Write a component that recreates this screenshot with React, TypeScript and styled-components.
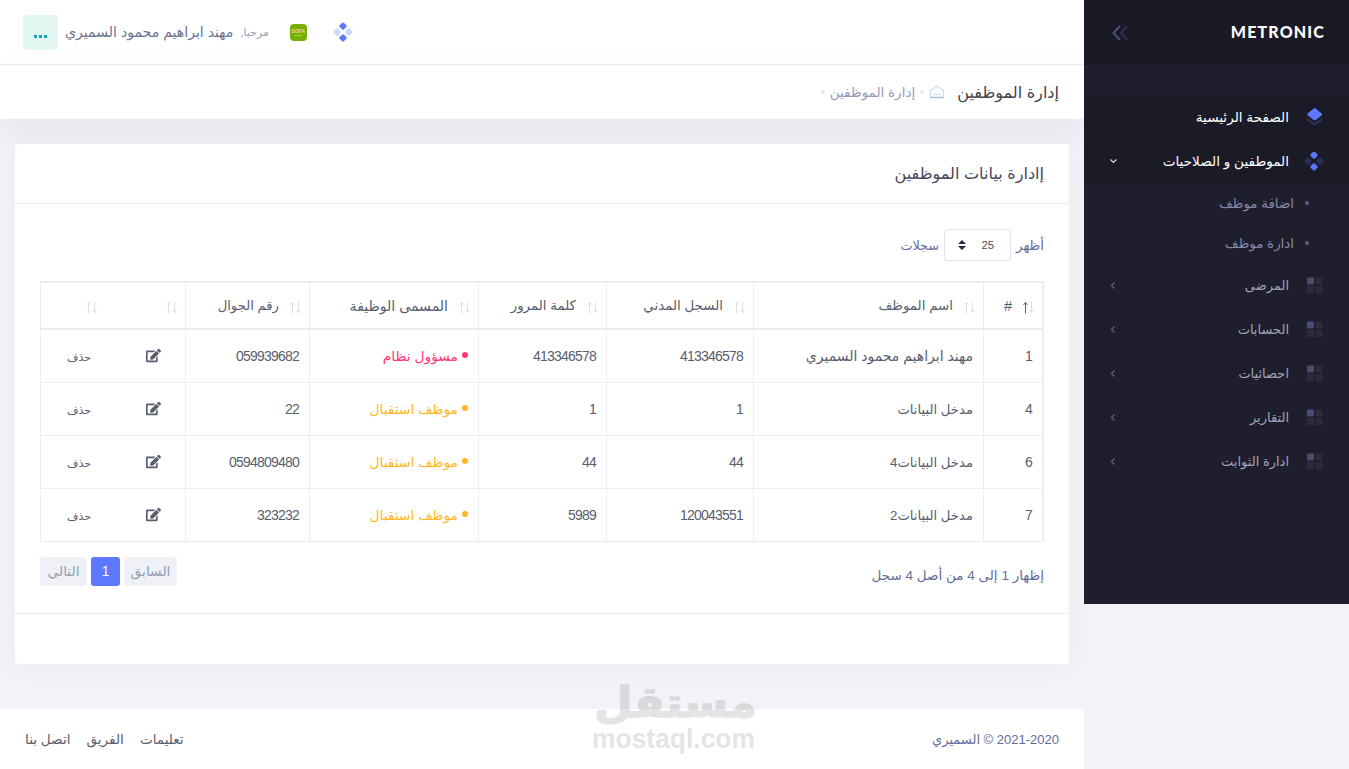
import React, { useState } from 'react';
import styled, { createGlobalStyle } from 'styled-components';
import { FaEdit } from 'react-icons/fa';

const GlobalStyle = createGlobalStyle`
  * {
    box-sizing: border-box;
  }

  body {
    margin: 0;
    background: #f2f3f8;
    color: #646c9a;
    font-family: 'Liberation Sans', 'DejaVu Sans', sans-serif;
    font-size: 13px;
    overflow: hidden;
  }
`;

const Page = styled.div`
  direction: rtl;
  display: flex;
  align-items: flex-start;
  width: 1349px;
  height: 769px;
  position: relative;
  overflow: hidden;
`;

const Text = styled.span<{ $size?: number; $color?: string }>`
  font-size: ${({ $size }) => $size || 13.4}px;
  color: ${({ $color }) => $color || 'inherit'};
  white-space: nowrap;
`;

const Sidebar = styled.aside`
  width: 265px;
  height: 604px;
  flex-shrink: 0;
  background: #1e1e2d;
  position: relative;
  z-index: 1;
`;

const Brand = styled.div`
  height: 65px;
  display: flex;
  align-items: center;
  justify-content: space-between;
  padding: 0 25px 0 27px;
  background: #1a1a27;
`;

const BrandName = styled.div`
  direction: ltr;
  font-family: Lato, sans-serif;
  font-size: 16px;
  font-weight: 900;
  letter-spacing: 1.15px;
  margin: -3px -1px 0 0;
  color: #fff;
`;

const Menu = styled.nav`
  margin-top: 30px;
`;

const MenuItem = styled.div<{ $active?: boolean }>`
  height: 44px;
  display: flex;
  align-items: center;
  padding: 0 25px;
  color: ${({ $active }) => ($active ? '#fff' : '#a2a3b7')};
  background: ${({ $active }) => ($active ? '#1b1b28' : 'transparent')};

  > svg:first-child {
    flex-shrink: 0;
    margin-left: 15px;
  }

  > svg:last-child:not(:first-child) {
    margin-right: auto;
  }
`;

const SubItem = styled.div`
  height: 40px;
  display: flex;
  align-items: center;
  gap: 11px;
  padding-right: 40px;
  color: #868aa8;

  &::before {
    content: '';
    width: 4px;
    height: 4px;
    border-radius: 50%;
    background: #5c5e81;
  }
`;

const Main = styled.div`
  width: 1084px;
  height: 769px;
  display: flex;
  flex-direction: column;
`;

const Topbar = styled.header`
  height: 65px;
  display: flex;
  align-items: center;
  justify-content: flex-end;
  padding-left: 23px;
  background: #fff;
  border-bottom: 1px solid #ebedf2;
`;

const AppLogo = styled.div`
  width: 17px;
  height: 17px;
  margin: 0 26px 0 21px;
  border-radius: 4px;
  background: #76b007;
  color: #f3c9b0;
  font: bold 5px/14px 'Liberation Sans', sans-serif;
  text-align: center;

  &::after {
    content: '';
    display: block;
    width: 7px;
    margin: -3px auto 0;
    border-top: 1px dotted #d5e5a5;
  }
`;

const UserName = styled(Text)`
  margin: 0 7px 0 7px;
`;

const UserBadge = styled.div`
  width: 35px;
  height: 35px;
  display: flex;
  align-items: center;
  justify-content: center;
  gap: 2px;
  padding-top: 8px;
  border-radius: 4px;
  background: #e2f7f2;

  i {
    width: 3px;
    height: 3px;
    background: #1da3b8;
  }
`;

const Subheader = styled.div`
  height: 54px;
  flex-shrink: 0;
  display: flex;
  align-items: center;
  padding: 0 25px;
  background: #fff;
  box-shadow: 0 10px 30px 0 rgba(82, 63, 105, 0.08);
`;

const Crumbs = styled.div`
  display: flex;
  align-items: center;
  gap: 5px;
  margin-right: 12px;
`;

const CrumbDot = styled.i`
  width: 4px;
  height: 4px;
  border-radius: 50%;
  background: #e7e8ef;
`;

const Card = styled.section`
  height: 520px;
  flex-shrink: 0;
  margin: 25px 15px 45px;
  background: #fff;
  border-radius: 4px;
  box-shadow: 0 0 30px 0 rgba(82, 63, 105, 0.05);
`;

const CardHead = styled.div`
  height: 60px;
  display: flex;
  align-items: center;
  padding: 0 25px;
  border-bottom: 1px solid #ebedf2;
`;

const CardBody = styled.div`
  height: 410px;
  padding: 25px 25px 0;
  border-bottom: 1px solid #ebedf2;
`;

const LengthRow = styled.div`
  height: 32px;
  display: flex;
  align-items: center;
  gap: 5px;
  margin-bottom: 20px;
`;

const LengthSelect = styled.button`
  width: 67px;
  height: 32px;
  display: flex;
  align-items: center;
  gap: 15px;
  padding: 0 16px 0 0;
  border: 1px solid #e2e5ec;
  border-radius: 3px;
  background: #fff;
  color: #495057;
  font: 11.4px 'Liberation Sans', sans-serif;
`;

const Table = styled.table`
  width: 1004px;
  table-layout: fixed;
  border-collapse: separate;
  border-spacing: 0;
  border-top: 2px solid #ebedf2;
  border-right: 2px solid #ebedf2;
  color: #595d6e;
`;

const HeadCell = styled.th<{ $plain?: boolean }>`
  height: 47px;
  padding: 0 7px 0 0;
  border-left: ${({ $plain }) => ($plain ? 0 : 1)}px solid #ebedf2;
  border-bottom: 2px solid #ebedf2;
  font-weight: 400;
`;

const HeadContent = styled.div`
  display: flex;
  align-items: center;
  gap: 10px;

  svg {
    margin-top: 4px;
  }
`;

const Cell = styled.td<{ $plain?: boolean; $right?: number }>`
  height: 53px;
  padding: 0 ${({ $right }) => $right ?? 10}px 0 0;
  border-left: ${({ $plain }) => ($plain ? 0 : 1)}px solid #ebedf2;
  border-bottom: 1px solid #ebedf2;
  text-align: right;
  vertical-align: middle;
  white-space: nowrap;

  svg {
    display: block;
    margin-top: -2px;
  }
`;

const Digits = styled.span`
  font-size: 14px;
  letter-spacing: -0.78px;
`;

const Status = styled.div<{ $color: string }>`
  display: flex;
  align-items: center;
  gap: 4px;
  color: ${({ $color }) => $color};

  &::before {
    content: '';
    width: 6px;
    height: 6px;
    margin-top: -2px;
    border-radius: 50%;
    background: ${({ $color }) => $color};
  }
`;

const TableFooter = styled.div`
  display: flex;
  justify-content: space-between;
  align-items: flex-start;
  margin-top: 15px;
`;

const Info = styled.div`
  height: 36px;
  display: flex;
  align-items: center;
`;

const Pager = styled.div`
  display: flex;
  gap: 4px;
`;

const PageButton = styled.button<{ $width: number; $current?: boolean }>`
  width: ${({ $width }) => $width}px;
  height: 29px;
  padding: 0 0 1px;
  border: 0;
  border-radius: 3px;
  background: ${({ $current }) => ($current ? '#5d78ff' : '#f0f0f7')};
  color: ${({ $current }) => ($current ? '#fff' : '#93a2b4')};
  font: 13.8px 'Liberation Sans', 'DejaVu Sans', sans-serif;
`;

const Footer = styled.footer`
  height: 60px;
  flex-shrink: 0;
  display: flex;
  align-items: center;
  justify-content: space-between;
  padding: 0 25px;
  background: #fff;
`;

const FooterLinks = styled.div`
  display: flex;
  gap: 16px;
  color: #595d6e;
`;

const Watermark = styled.div`
  position: absolute;
  left: 589px;
  top: 672px;
  z-index: 2;
  direction: ltr;
  opacity: 0.1;
  pointer-events: none;
`;

const LayersIcon = () => (
  <svg width="20" height="20" viewBox="-1.700 0 20 20">
    <path d="M1.500 11 9 16l7.500-5v2.500L9 18.500 1.500 13.500z" fill="#2e3160" />
    <path d="M8 1.500Q9 .7 10 1.500L16 6.400Q17 7.300 16 8.200L10 13Q9 13.800 8 13L2 8.200Q1 7.300 2 6.400z" fill="#5d78ff" />
  </svg>
);

const DiamondsIcon = ({ side }: { side: string }) => (
  <svg width="20" height="20" viewBox="0 0 20 20">
    <g fill="#5d78ff">
      <rect x="7" y="1.100" width="6" height="6" rx="1.500" transform="rotate(45 10 4.100)" />
      <rect x="7" y="12.900" width="6" height="6" rx="1.500" transform="rotate(45 10 15.900)" />
    </g>
    <g fill={side}>
      <rect x="1.100" y="7" width="6" height="6" rx="1.500" transform="rotate(45 4.100 10)" />
      <rect x="12.900" y="7" width="6" height="6" rx="1.500" transform="rotate(45 15.900 10)" />
    </g>
  </svg>
);

const GridIcon = () => (
  <svg width="20" height="18" viewBox="-2 0 20 18">
    <rect x="1" y="1.500" width="7" height="7" rx="1" fill="#494b74" />
    <g fill="#2d2b40">
      <rect x="9.500" y="1.500" width="7" height="7" rx="1" />
      <rect x="1" y="10" width="7" height="7" rx="1" />
      <rect x="9.500" y="10" width="7" height="7" rx="1" />
    </g>
  </svg>
);

const CollapseIcon = () => (
  <svg width="18" height="16" viewBox="0 0 18 16" fill="none" strokeWidth="2">
    <path d="M16 1 10 8l6 7" stroke="#2f3048" />
    <path d="M9 1 2.500 8 9 15" stroke="#4a4c7c" />
  </svg>
);

const Chevron = ({ open }: { open?: boolean }) => (
  <svg width="9" height="8" viewBox="0 0 9 8" fill="none">
    {open ? (
      <path d="M1.500 2.500 4.500 5.500l3-3" stroke="#d5d8ec" strokeWidth="1.200" />
    ) : (
      <path d="M5.500 1.500 2.500 4.500l3 3" stroke="#5c5e81" strokeWidth="1.200" />
    )}
  </svg>
);

const HomeIcon = () => (
  <svg width="16" height="14" viewBox="0 0 16 14" fill="none">
    <path d="M1.500 12V5.500L8 1l6.500 4.500V12" stroke="#cbddec" strokeWidth="1.300" />
    <path d="M4 9.500h8" stroke="#cbddec" />
    <path d="M1 12.500h14" stroke="#aebfdb" strokeWidth="1.500" />
  </svg>
);

const SortIcon = ({ asc }: { asc?: boolean }) => (
  <svg width="13" height="13" viewBox="0 0 13 13" fill="none">
    <path d="M3.500 12.500V1.500M1.500 4 3.500 1.500 5.500 4" stroke={asc ? '#5f6470' : '#dedfe2'} />
    <path d="M9.500 .5v11M7.500 9l2 2.500 2-2.500" stroke="#dedfe2" />
  </svg>
);

const SelectArrows = () => (
  <svg width="8" height="10" viewBox="0 0 8 10" fill="#2a2a3d">
    <path d="M0 4 4 0l4 4zM0 6h8L4 10z" />
  </svg>
);

const menuItems = ['المرضى', 'الحسابات', 'احصائيات', 'التقارير', 'ادارة الثوابت'];

const columns = [
  { name: '#', width: 59, size: 14.5 },
  { name: 'اسم الموظف', width: 230 },
  { name: 'السجل المدني', width: 147 },
  { name: 'كلمة المرور', width: 128 },
  { name: 'المسمى الوظيفة', width: 169, size: 14.1 },
  { name: 'رقم الجوال', width: 124, size: 13.2 },
  { name: '', width: 80 },
  { name: '', width: 65 },
];

const employees = [
  { id: 1, name: 'مهند ابراهيم محمود السميري', civil: '413346578', password: '413346578', role: 'مسؤول نظام', admin: true, phone: '059939682' },
  { id: 4, name: 'مدخل البيانات', civil: '1', password: '1', role: 'موظف استقبال', admin: false, phone: '22' },
  { id: 6, name: 'مدخل البيانات4', civil: '44', password: '44', role: 'موظف استقبال', admin: false, phone: '0594809480' },
  { id: 7, name: 'مدخل البيانات2', civil: '120043551', password: '5989', role: 'موظف استقبال', admin: false, phone: '323232' },
];

const App: React.FC = () => {
  const [currentPage, setCurrentPage] = useState(1);

  return (
    <Page>
      <GlobalStyle />
      <Sidebar>
        <Brand>
          <BrandName>METRONIC</BrandName>
          <CollapseIcon />
        </Brand>
        <Menu>
          <MenuItem $active>
            <LayersIcon />
            <Text $size={13.6}>الصفحة الرئيسية</Text>
          </MenuItem>
          <MenuItem $active>
            <DiamondsIcon side="#2b2e5c" />
            <Text $size={13.6}>الموطفين و الصلاحيات</Text>
            <Chevron open />
          </MenuItem>
          <SubItem><Text>اضافة موظف</Text></SubItem>
          <SubItem><Text>ادارة موظف</Text></SubItem>
          {menuItems.map((item) => (
            <MenuItem key={item}>
              <GridIcon />
              <Text $size={13}>{item}</Text>
              <Chevron />
            </MenuItem>
          ))}
        </Menu>
      </Sidebar>

      <Main>
        <Topbar>
          <DiamondsIcon side="#c8dcfa" />
          <AppLogo>SOFA</AppLogo>
          <Text $size={11} $color="#959cb6">مرحبا,</Text>
          <UserName $size={14.1} $color="#6c7293">مهند ابراهيم محمود السميري</UserName>
          <UserBadge><i /><i /><i /></UserBadge>
        </Topbar>
        <Subheader>
          <Text $size={16.1} $color="#434349">إدارة الموظفين</Text>
          <Crumbs>
            <HomeIcon />
            <CrumbDot />
            <Text $size={13.5} $color="#959cb6">إدارة الموظفين</Text>
            <CrumbDot />
          </Crumbs>
        </Subheader>

        <Card>
          <CardHead>
            <Text $size={16.1} $color="#48465b">إادارة بيانات الموظفين</Text>
          </CardHead>
          <CardBody>
            <LengthRow>
              <Text>أظهر</Text>
              <LengthSelect>
                25
                <SelectArrows />
              </LengthSelect>
              <Text $size={12.8}>سجلات</Text>
            </LengthRow>
            <Table>
              <colgroup>
                {columns.map((column, index) => (
                  <col key={index} style={{ width: column.width }} />
                ))}
              </colgroup>
              <thead>
                <tr>
                  {columns.map((column, index) => (
                    <HeadCell key={index} $plain={index === 6}>
                      <HeadContent>
                        <SortIcon asc={index === 0} />
                        <Text $size={column.size}>{column.name}</Text>
                      </HeadContent>
                    </HeadCell>
                  ))}
                </tr>
              </thead>
              <tbody>
                {employees.map((item) => (
                  <tr key={item.id}>
                    <Cell><Digits>{item.id}</Digits></Cell>
                    <Cell><Text $size={item.id === 1 ? 14 : 13.2}>{item.name}</Text></Cell>
                    <Cell><Digits>{item.civil}</Digits></Cell>
                    <Cell><Digits>{item.password}</Digits></Cell>
                    <Cell>
                      <Status $color={item.admin ? '#fd397a' : '#ffb822'}>
                        <Text $size={13.8}>{item.role}</Text>
                      </Status>
                    </Cell>
                    <Cell><Digits>{item.phone}</Digits></Cell>
                    <Cell $plain $right={24}><FaEdit size={15} /></Cell>
                    <Cell $right={14}><Text $size={11}>حذف</Text></Cell>
                  </tr>
                ))}
              </tbody>
            </Table>
            <TableFooter>
              <Info><Text $size={13.5}>إظهار 1 إلى 4 من أصل 4 سجل</Text></Info>
              <Pager>
                <PageButton $width={53}>السابق</PageButton>
                <PageButton $width={29} $current={currentPage === 1} onClick={() => setCurrentPage(1)}>1</PageButton>
                <PageButton $width={47}>التالي</PageButton>
              </Pager>
            </TableFooter>
          </CardBody>
        </Card>

        <Footer>
          <Text $size={13}>{'2020-\u200f2021 © السميري'}</Text>
          <FooterLinks>
            <Text $size={13.6}>تعليمات</Text>
            <Text $size={13.6}>الفريق</Text>
            <Text $size={13.6}>اتصل بنا</Text>
          </FooterLinks>
        </Footer>
      </Main>

      <Watermark>
        <svg width="190" height="88" viewBox="0 0 190 88">
          <text transform="translate(5 45) scale(1.06 1)" stroke="#000" strokeWidth="1.500" strokeLinejoin="round" fontFamily="DejaVu Sans" fontWeight="700" fontSize="42">مستقل</text>
          <text x="3" y="76" textLength="163" lengthAdjust="spacingAndGlyphs" fontFamily="Liberation Sans" fontWeight="700" fontSize="27">mostaql.com</text>
        </svg>
      </Watermark>
    </Page>
  );
};

export default App;
